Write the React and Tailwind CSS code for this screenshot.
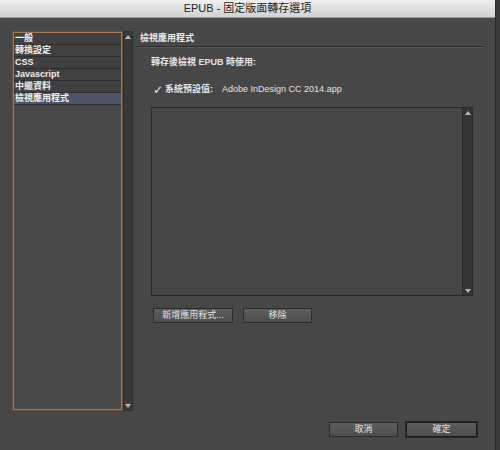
import React from 'react';

const PAGES = ['一般', '轉換設定', 'CSS', 'Javascript', '中繼資料', '檢視應用程式'];

function ScrollArrow({ up }) {
    return (
        <div className="w-full h-[9px] flex items-center justify-center">
            <svg width="6" height="4" viewBox="0 0 6 4">
                {up ? <path d="M3 0 L6 4 L0 4 Z" fill="#b8b8b8" /> : <path d="M0 0 L6 0 L3 4 Z" fill="#b8b8b8" />}
            </svg>
        </div>
    );
}

function Button({ children, primary, className }) {
    return (
        <button
            type="button"
            className={`h-[15px] flex items-center justify-center text-[9px] leading-none text-[#e2e2e2] bg-linear-to-b from-[#5e5e5e] to-[#4e4e4e] border ${primary ? 'border-[#1c1c1c] shadow-[0_0_0_1px_#2a2a2a]' : 'border-[#2c2c2c]'} ${className}`}
        >
            {children}
        </button>
    );
}

export default function App() {
    const selected = '檢視應用程式';

    return (
        <div className="w-[500px] h-[450px] bg-[#3a3a3a] font-['Liberation_Sans','Noto_Sans_CJK_TC',sans-serif]">
            <div className="w-[496px] h-[450px] bg-[#474747] border-r border-[#2a2a2a] flex flex-col">
                {/* Title bar */}
                <div className="h-[18px] shrink-0 bg-linear-to-b from-[#f0f0f0] to-[#d2d2d2] border-b border-[#9c9c9c] flex items-center justify-center text-[11px] text-[#262626]">
                    EPUB - 固定版面轉存選項
                </div>

                <div className="flex flex-1 pl-[12px] pt-[13px]">
                    {/* Left list */}
                    <div className="flex h-[380px] shrink-0">
                        <div className="w-[111px] h-full border border-[#6e4d32] shadow-[inset_0_0_0_1px_#a9794d] bg-[#484848] p-[1px]">
                            {PAGES.map((p) => (
                                <div
                                    key={p}
                                    className={`h-[12px] flex items-center px-[1px] text-[9px] font-bold leading-none text-[#efefef] border-b border-[#2e2e2e] ${p === selected ? 'bg-[#4c5568]' : 'bg-[#404040]'}`}
                                >
                                    {p}
                                </div>
                            ))}
                        </div>
                        <div className="w-[10px] h-full bg-[#383838] border border-[#2e2e2e] flex flex-col justify-between">
                            <ScrollArrow up />
                            <ScrollArrow />
                        </div>
                    </div>

                    {/* Right pane */}
                    <div className="ml-[3px] w-[349px] flex flex-col">
                        <div className="h-[16px] shrink-0 flex items-center pl-[4px] text-[9px] font-bold text-[#ececec] border-b border-[#2f2f2f] shadow-[0_1px_0_#555]">
                            檢視應用程式
                        </div>

                        <div className="mt-[10px] pl-[15px] h-[12px] flex items-center text-[9px] font-bold text-[#e4e4e4]">
                            轉存後檢視 EPUB 時使用:
                        </div>

                        <div className="mt-[15px] pl-[17px] h-[12px] flex items-center text-[9px] text-[#e4e4e4]">
                            <span className="font-['DejaVu_Sans',sans-serif] text-[12px] leading-none text-[#e8e8e8] mr-[2px]">✓</span>
                            <span className="font-bold">系統預設值:</span>
                            <span className="ml-[9px]">Adobe InDesign CC 2014.app</span>
                        </div>

                        <div className="mt-[11px] ml-[15px] w-[322px] h-[189px] shrink-0 bg-[#464646] border border-[#2a2a2a] flex justify-end">
                            <div className="w-[10px] h-full bg-[#363636] border-l border-[#2a2a2a] flex flex-col justify-between">
                                <ScrollArrow up />
                                <ScrollArrow />
                            </div>
                        </div>

                        <div className="mt-[12px] ml-[17px] flex gap-[10px]">
                            <Button className="w-[80px]">新增應用程式...</Button>
                            <Button className="w-[69px]">移除</Button>
                        </div>

                        <div className="mt-auto mb-[13px] pr-[8px] flex justify-end gap-[8px]">
                            <Button className="w-[69px]">取消</Button>
                            <Button primary className="w-[71px]">確定</Button>
                        </div>
                    </div>
                </div>
            </div>
        </div>
    );
}
